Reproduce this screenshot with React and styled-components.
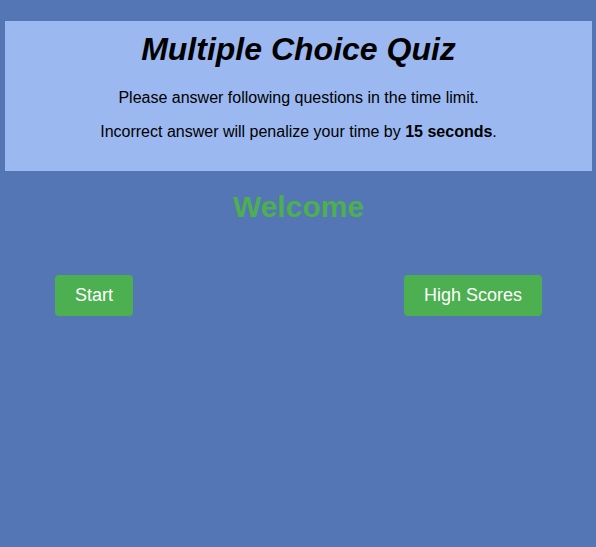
import styled, { createGlobalStyle } from "styled-components";

const GlobalStyle = createGlobalStyle`
  html, body {
    margin: 0;
    background-color: #5476b4;
    font-family: "Liberation Sans", Arial, sans-serif;
  }
`;

const App = () => {
  return (
    <Root>
      <GlobalStyle />
      <Header>
        <Title>Multiple Choice Quiz</Title>
        <Text>Please answer following questions in the time limit.</Text>
        <Text>
          Incorrect answer will penalize your time by <b>15 seconds</b>.
        </Text>
      </Header>
      <Welcome>Welcome</Welcome>
      <BtnHolder>
        <Button>Start</Button>
        <Button>High Scores</Button>
      </BtnHolder>
    </Root>
  );
};

export default App;

const Root = styled.div`
  padding: 21px 4px 0 5px;
  min-height: 547px;
  box-sizing: border-box;
`;

const Header = styled.header`
  background-color: #9bb8f0;
  text-align: center;
  padding: 10px 0 14px;
  color: #000;
`;

const Title = styled.h1`
  margin: 0 0 21px;
  font-size: 32px;
  font-style: italic;
  font-weight: bold;
  line-height: 37px;
`;

const Text = styled.p`
  margin: 16px 0;
  font-size: 16px;
  line-height: 18px;
`;

const Welcome = styled.h2`
  margin: 19px 0 0;
  text-align: center;
  color: #4caf50;
  font-size: 30px;
  line-height: 34px;
  font-weight: bold;
`;

const BtnHolder = styled.div`
  display: flex;
  justify-content: space-between;
  margin-top: 51px;
  padding: 0 50px 0 50px;
`;

const Button = styled.button`
  padding: 10px 20px;
  background-color: #4caf50;
  color: white;
  border: none;
  border-radius: 4px;
  font-family: "Liberation Sans", Arial, sans-serif;
  font-size: 18px;
  line-height: 21px;
  cursor: pointer;
`;
